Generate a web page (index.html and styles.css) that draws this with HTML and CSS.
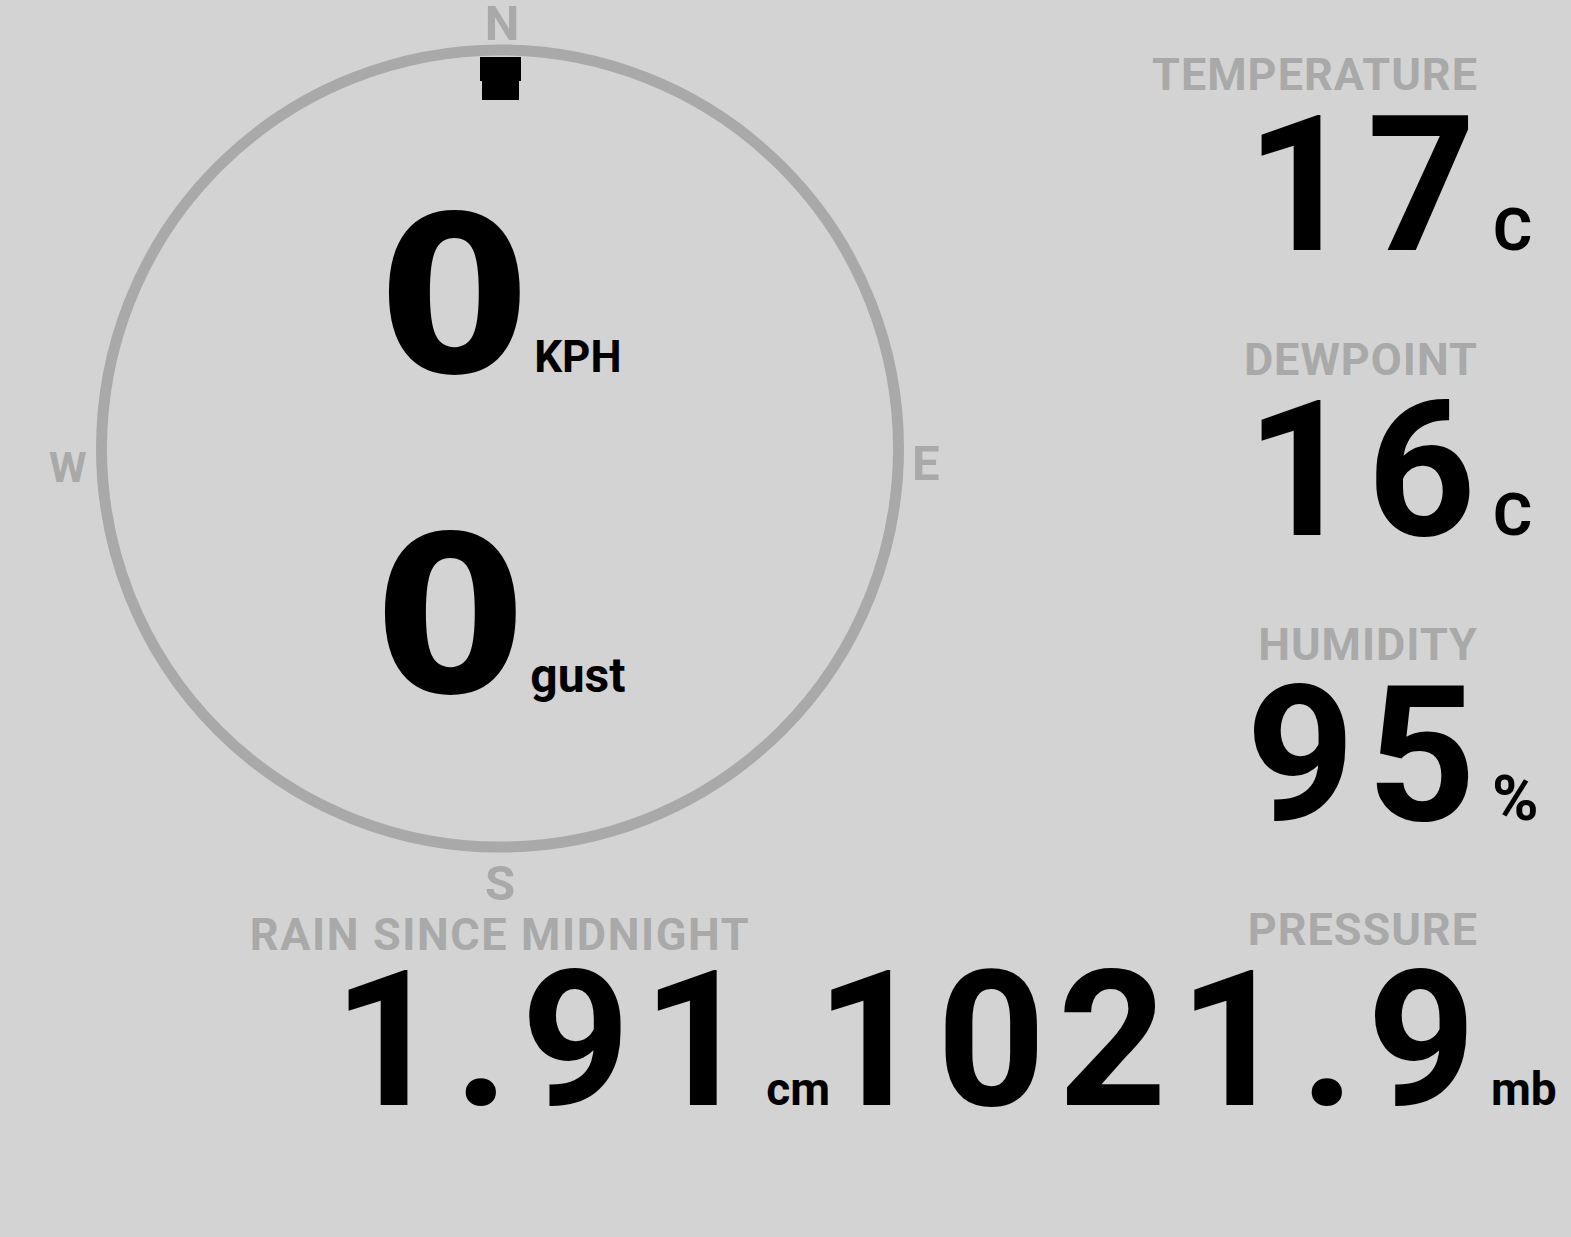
FILE: index.html
```html
<!DOCTYPE html>
<html lang="en">
<head>
  <meta charset="UTF-8" />
  <meta name="viewport" content="width=device-width, initial-scale=1" />
  <title>Weather Station</title>
  <link rel="stylesheet" href="styles.css">
</head>
<body>
  <div class="board">
    <div class="compass">
      <svg class="compass-ring" viewBox="0 0 1000 910" width="1000" height="910">
        <circle cx="500" cy="448.5" r="398.5" />
        <path class="needle" d="M480 57 H521 V81 H519 V100 H482 V81 H480 Z" />
        <text class="point" x="502" y="40" text-anchor="middle">N</text>
        <text class="point" x="912" y="480">E</text>
        <text class="point" x="500" y="900" text-anchor="middle">S</text>
        <text class="point point-w" x="49" y="482">W</text>
      </svg>

      <div class="reading">
        <span class="reading-value">0</span>
        <span class="reading-unit">KPH</span>
      </div>
      <div class="reading">
        <span class="reading-value">0</span>
        <span class="reading-unit">gust</span>
      </div>
    </div>

    <div class="stats">
      <div class="stat">
        <div class="stat-label">TEMPERATURE</div>
        <div class="stat-value">17</div>
        <div class="stat-unit">C</div>
      </div>
      <div class="stat">
        <div class="stat-label">DEWPOINT</div>
        <div class="stat-value">16</div>
        <div class="stat-unit">C</div>
      </div>
      <div class="stat">
        <div class="stat-label">HUMIDITY</div>
        <div class="stat-value">95</div>
        <div class="stat-unit percent">%</div>
      </div>
    </div>

    <div class="rain">
      <div class="stat-label">RAIN SINCE MIDNIGHT</div>
      <div class="rain-row">
        <div class="stat-value">1.91</div>
        <div class="stat-unit small">cm</div>
      </div>
    </div>

    <div class="stat pressure">
      <div class="stat-label">PRESSURE</div>
      <div class="stat-value">1021.9</div>
      <div class="stat-unit small">mb</div>
    </div>
  </div>
</body>
</html>
```

FILE: styles.css
```css
/* Plain grey kiosk board */
body {
  font-family: Roboto, "Liberation Sans", sans-serif;
  font-weight: 700;
  background: #d3d3d3;
  color: #000;
  margin: 0;
  padding: 0;
  min-height: 100vh;
}

.board {
  display: grid;
  grid-template-columns: 1000px 1fr;
  grid-template-rows: auto auto;
  align-items: end;
}

/* Wind compass */
.compass {
  position: relative;
  height: 905px;
  padding-top: 137px;
  box-sizing: border-box;
  align-self: start;
}

.compass-ring {
  position: absolute;
  top: 0;
  left: 0;
  overflow: visible;
}

.compass-ring circle {
  fill: none;
  stroke: #a9a9a9;
  stroke-width: 11;
}

.needle {
  fill: #000;
}

.point {
  font-family: Roboto, sans-serif;
  font-weight: 700;
  font-size: 49px;
  fill: #a9a9a9;
}

.point-w {
  font-size: 43px;
}

.reading {
  position: relative;
  display: flex;
  justify-content: center;
  align-items: baseline;
  height: 320px;
}

.reading-value {
  font-family: "DejaVu Sans", sans-serif;
  font-size: 218px;
  line-height: 320px;
}

.reading-unit {
  font-size: 44px;
  margin-left: 4px;
}

.reading + .reading .reading-unit {
  font-size: 48px;
}

/* Right hand readings */
.stats {
  align-self: start;
  padding-top: 52px;
  padding-right: 16px;
  display: flex;
  flex-direction: column;
  gap: 64px;
}

.stat {
  display: grid;
  grid-template-columns: minmax(0, 1fr) 82px;
}

.stat-label {
  grid-column: 1;
  justify-self: end;
  margin-right: -5px;
  font-size: 45px;
  line-height: 45px;
  letter-spacing: 1px;
  color: #a9a9a9;
  white-space: nowrap;
}

.stat-value {
  grid-column: 1;
  justify-self: end;
  align-self: baseline;
  font-size: 190px;
  line-height: 176px;
  letter-spacing: 12px;
  margin-right: -15px;
  white-space: nowrap;
}

.stat-unit {
  grid-column: 2;
  align-self: baseline;
  padding-left: 20px;
  font-size: 60px;
  line-height: 60px;
}

.stat-unit.percent {
  font-size: 63px;
  padding-left: 19px;
}

.stat-unit.small {
  font-size: 46px;
  line-height: 46px;
  padding-left: 18px;
}

.pressure {
  padding-right: 16px;
  padding-top: 2px;
}

/* Rain sits under the compass */
.rain {
  display: flex;
  flex-direction: column;
}

.rain .stat-label {
  align-self: center;
  margin-right: 0;
  margin-bottom: -5px;
  letter-spacing: 1.6px;
}

.rain-row {
  display: flex;
  align-items: baseline;
  justify-content: flex-end;
  padding-right: 170px;
}
```
